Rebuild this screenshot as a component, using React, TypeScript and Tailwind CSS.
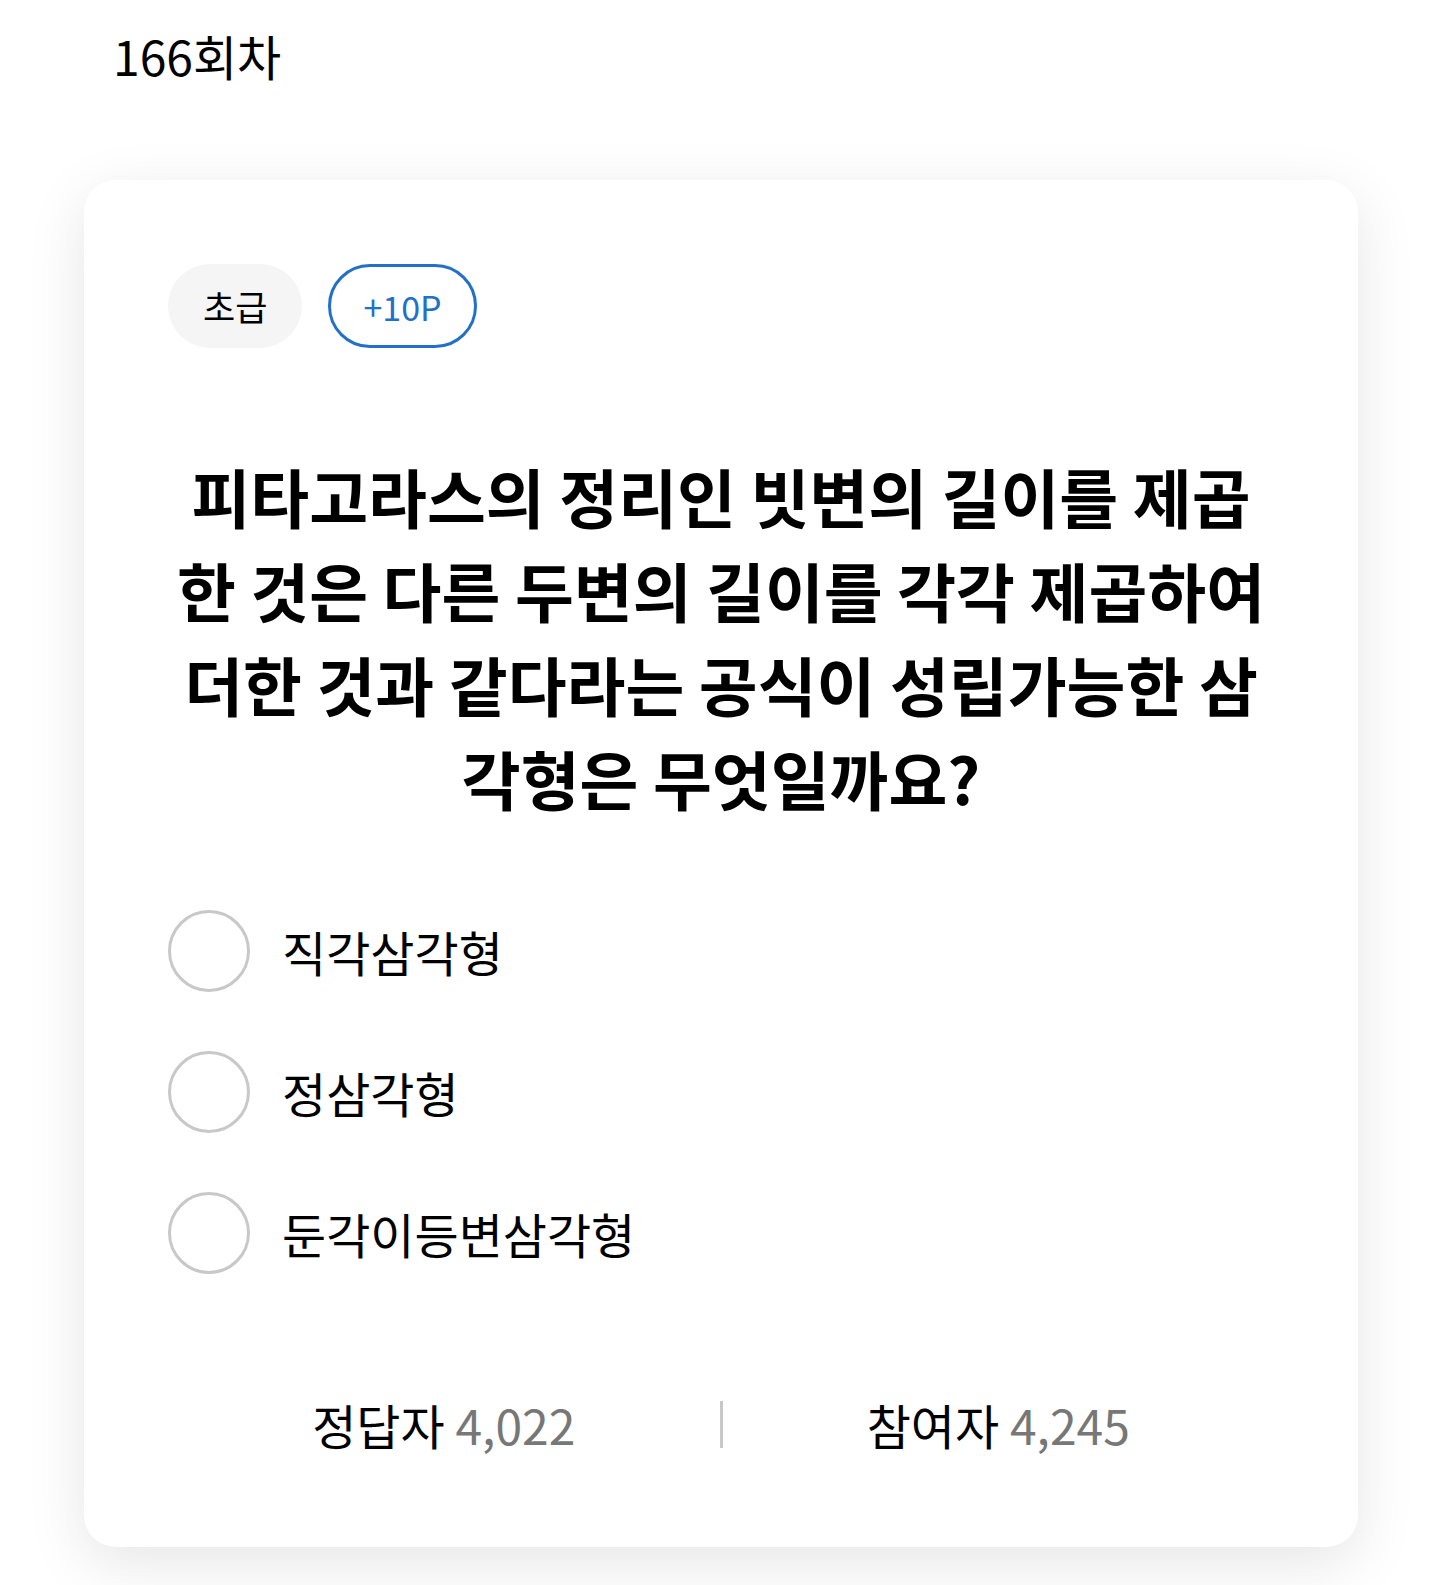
import React from "react";

const font = { fontFamily: '"Noto Sans CJK KR", "Noto Sans", sans-serif' };

const lines = [
  "피타고라스의 정리인 빗변의 길이를 제곱",
  "한 것은 다른 두변의 길이를 각각 제곱하여",
  "더한 것과 같다라는 공식이 성립가능한 삼",
  "각형은 무엇일까요?",
];

const options = ["직각삼각형", "정삼각형", "둔각이등변삼각형"];

export default function App() {
  return (
    <div className="w-[1439px] min-h-[1585px] bg-white text-black" style={font}>
      <div className="pl-[113px] pt-[20px] h-[180px]">
        <div className="text-[48px] leading-[70px] text-black">166회차</div>
      </div>
      <div className="ml-[84px] w-[1274px] rounded-[32px] bg-white shadow-[0_16px_60px_rgba(0,0,0,0.1)] px-[84px] pt-[84px] pb-[93px]">
        <div className="flex gap-[26px]">
          <div className="h-[84px] px-[35px] rounded-full bg-[#f5f5f5] flex items-center text-[35px] text-black">
            초급
          </div>
          <div className="h-[84px] px-[32px] rounded-full border-[3px] border-[#2270c8] flex items-center text-[34px] text-[#2270c8]">
            +10P
          </div>
        </div>
        <div className="mt-[100px] text-center font-bold text-[64px] leading-[94px] text-black">
          {lines.map((l) => (
            <div key={l} className="whitespace-nowrap">
              {l}
            </div>
          ))}
        </div>
        <div className="mt-[86px] flex flex-col gap-[59px]">
          {options.map((o) => (
            <div key={o} className="flex items-center gap-[32px]">
              <div className="w-[82px] h-[82px] rounded-full border-[3px] border-[#c8c8c8] shrink-0" />
              <div className="text-[48px] leading-[60px] text-black">{o}</div>
            </div>
          ))}
        </div>
        <div className="mt-[120px] flex items-center">
          <div className="flex-1 text-center text-[48px] leading-[60px] text-black">
            정답자 <span className="text-[#777]">4,022</span>
          </div>
          <div className="w-[3px] h-[47px] bg-[#c8c8c8]" />
          <div className="flex-1 text-center text-[48px] leading-[60px] text-black">
            참여자 <span className="text-[#777]">4,245</span>
          </div>
        </div>
      </div>
    </div>
  );
}
